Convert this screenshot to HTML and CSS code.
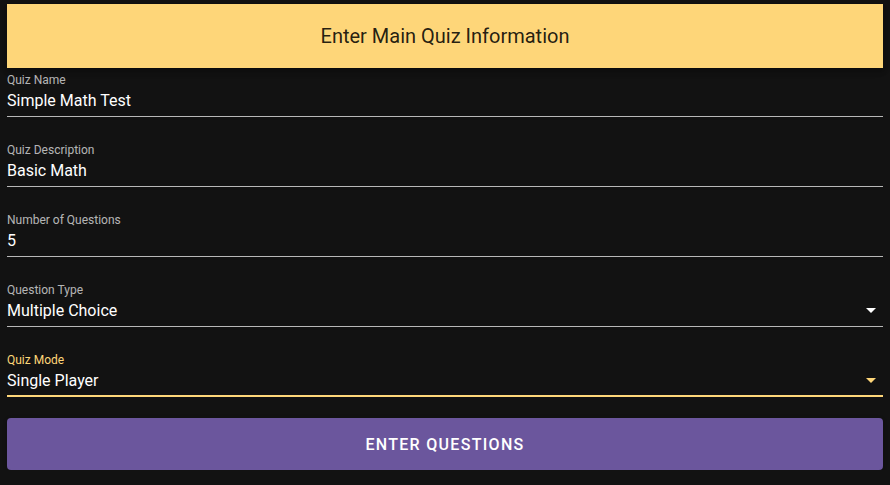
FILE: index.html
```html
<!DOCTYPE html>
<html lang="en">
<head>
<meta charset="utf-8">
<title>Enter Main Quiz Information</title>
<link rel="stylesheet" href="styles.css">
</head>
<body>
<div class="page">
  <header class="banner">
    <h1 class="banner-title">Enter Main Quiz Information</h1>
  </header>
  <form class="form">
    <div class="field">
      <label class="field-label">Quiz Name</label>
      <div class="field-input">Simple Math Test</div>
    </div>
    <div class="field">
      <label class="field-label">Quiz Description</label>
      <div class="field-input">Basic Math</div>
    </div>
    <div class="field">
      <label class="field-label">Number of Questions</label>
      <div class="field-input">5</div>
    </div>
    <div class="field">
      <label class="field-label">Question Type</label>
      <div class="field-input select">Multiple Choice
        <svg class="arrow" viewBox="0 0 24 24" width="24" height="24"><path d="M7 10l5 5 5-5z"/></svg>
      </div>
    </div>
    <div class="field focused">
      <label class="field-label">Quiz Mode</label>
      <div class="field-input select">Single Player
        <svg class="arrow" viewBox="0 0 24 24" width="24" height="24"><path d="M7 10l5 5 5-5z"/></svg>
      </div>
    </div>
    <button type="button" class="submit">Enter Questions</button>
  </form>
</div>
</body>
</html>
```

FILE: styles.css
```css
html, body {
  margin: 0;
  padding: 0;
  background: #121212;
}
body {
  font-family: Roboto, "Noto Sans", "Liberation Sans", sans-serif;
  color: #fff;
}
.page {
  padding: 4px 7px 0 7px;
}
.banner {
  height: 64px;
  background: #fed679;
  display: flex;
  align-items: center;
  justify-content: center;
  box-shadow: 0 2px 4px -1px rgba(0,0,0,0.2), 0 4px 5px 0 rgba(0,0,0,0.14), 0 1px 10px 0 rgba(0,0,0,0.12);
}
.banner-title {
  margin: 0;
  font-size: 20px;
  font-weight: 400;
  color: rgba(0,0,0,0.87);
}
.form {
  display: flex;
  flex-direction: column;
  padding-top: 1px;
}
.field {
  position: relative;
  height: 48px;
  margin-bottom: 22px;
  display: flex;
  flex-direction: column;
}
.field-label {
  box-sizing: border-box;
  height: 16px;
  padding-top: 4px;
  font-size: 12px;
  line-height: 14px;
  color: rgba(255,255,255,0.7);
}
.field-input {
  position: relative;
  box-sizing: border-box;
  height: 32px;
  padding: 4px 0 5px;
  font-size: 16px;
  line-height: 23px;
  color: #fff;
  border-bottom: 1px solid rgba(255,255,255,0.7);
}
.field.focused .field-label {
  color: #fed679;
}
.field.focused .field-input {
  border-bottom: 2px solid #fed679;
  padding-bottom: 4px;
}
.arrow {
  position: absolute;
  right: 0;
  top: 3px;
  fill: #fff;
}
.field.focused .arrow {
  fill: #fed679;
}
.submit {
  margin-top: -1px;
  height: 52px;
  border: none;
  border-radius: 4px;
  background: #6b569d;
  color: #fff;
  font-family: Roboto, "Noto Sans", "Liberation Sans", sans-serif;
  font-size: 16px;
  font-weight: 500;
  letter-spacing: 1.3px;
  text-transform: uppercase;
  box-shadow: 0 3px 1px -2px rgba(0,0,0,0.2), 0 2px 2px 0 rgba(0,0,0,0.14), 0 1px 5px 0 rgba(0,0,0,0.12);
}
```
